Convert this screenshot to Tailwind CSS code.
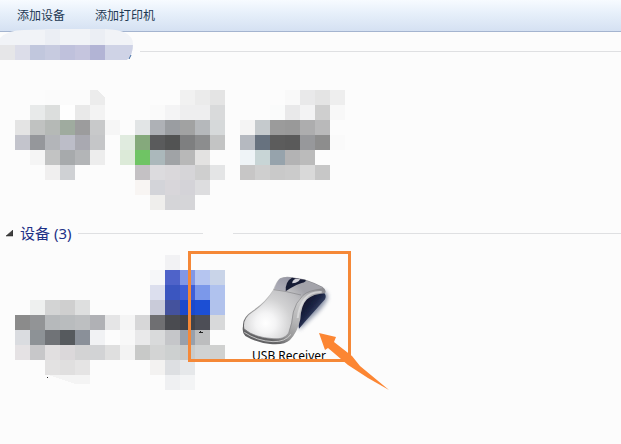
<!DOCTYPE html>
<html lang="zh-CN">
<head>
    <meta charset="utf-8">
    <title>设备和打印机</title>
    <script src="https://cdn.jsdelivr.net/npm/@tailwindcss/browser@4"></script>
</head>
<body class="min-h-screen bg-[#fcfcfc] font-['Noto_Sans','Noto_Sans_CJK_SC',sans-serif] text-black overflow-x-hidden">
    <header class="flex items-center h-8 pl-[17px] gap-[30px] text-xs text-[#1e3953] border-b border-[#a4b4cf] bg-linear-to-b from-[#f7fbff] from-0% via-[#e6effa] via-45% to-[#d5e1f2]">
        <button type="button">添加设备</button>
        <button type="button">添加打印机</button>
    </header>

    <main>
        <section>
            <div class="relative -mt-[3px] flex items-center gap-[7px]">
                <svg class="w-[133px] h-[31px] shrink-0" viewBox="0 0 133 31">
                    <clipPath id="pill"><path d="M0 9Q8 1 24 1L60 0H105Q133 1 133 15Q133 26 127 31H0z"/></clipPath>
                    <g clip-path="url(#pill)" shape-rendering="crispEdges">
                        <path fill="#f1f3f7" d="M0 0h133v31H0z"/>
                        <path fill="#ebeef4" d="M45 0h15v16H45zM90 0h15v16H90z"/>
                        <path fill="#e6e6e8" d="M0 16h15v15H0z"/>
                        <path fill="#dcdde9" d="M15 16h15v15H15z"/>
                        <path fill="#c1c7dd" d="M30 16h15v15H30z"/>
                        <path fill="#c7cbe0" d="M45 16h15v15H45z"/>
                        <path fill="#bfc1dc" d="M60 16h15v15H60z"/>
                        <path fill="#c5c5de" d="M75 16h15v15H75z"/>
                        <path fill="#b2b4d5" d="M90 16h15v15H90z"/>
                        <path fill="#cfd3e6" d="M105 16h28v15h-28z"/>
                    </g>
                    <path d="M131 26L129 30" stroke="#3c6aa0"/>
                </svg>
                <div class="grow h-px mt-[14px] bg-[#dfe0e2]"></div>
            </div>
            <div class="flex items-start pl-[15px] pt-[30px] h-[150px]">
                <svg class="w-[105px] h-[90px] shrink-0" viewBox="0 0 7 6" shape-rendering="crispEdges" data-tile="printer1"></svg>
                <svg class="w-[105px] h-[120px] shrink-0" viewBox="0 0 7 8" shape-rendering="crispEdges" data-tile="printer2"></svg>
                <svg class="w-[105px] h-[90px] shrink-0 ml-[15px]" viewBox="0 0 7 6" shape-rendering="crispEdges" data-tile="printer3"></svg>
            </div>
        </section>

        <section class="pt-[11px]">
            <div class="flex items-center h-6 gap-[7px]">
                <h2 class="shrink-0">
                    <button type="button" class="flex items-center gap-[7px] pl-[6px] text-[15px] leading-6 text-[#1e3287]">
                        <svg class="w-[7px] h-[7px]" viewBox="0 0 7 7"><path d="M7 0V6H0z" fill="#404040" stroke="#222" stroke-width=".5"/></svg>
                        设备 (3)
                    </button>
                </h2>
                <div class="w-[125px] h-px bg-[#dfe0e2]"></div>
                <div class="w-4 h-px"></div>
                <div class="grow h-px bg-[#dfe0e2]"></div>
            </div>
            <div class="flex items-start pl-[15px] pt-[10px]">
                <svg class="w-[105px] h-[90px] shrink-0 mt-[45px]" viewBox="0 0 7 6" shape-rendering="crispEdges" data-tile="device1"></svg>
                <svg class="w-[105px] h-[135px] shrink-0" viewBox="0 0 7 9" shape-rendering="crispEdges" data-tile="device2"></svg>
                <figure class="relative ml-[10px] pt-[13px] w-[108px] shrink-0">
                    <svg class="w-[100px] h-[80px]" viewBox="0 0 300 240">
                        <defs>
                            <radialGradient id="palm" gradientUnits="userSpaceOnUse" cx="92" cy="165" r="150">
                                <stop offset="0" stop-color="#fff"/>
                                <stop offset=".2" stop-color="#f4f4f5"/>
                                <stop offset=".5" stop-color="#d2d2d3"/>
                                <stop offset=".8" stop-color="#bdbdc0"/>
                                <stop offset="1" stop-color="#a3a3aa"/>
                            </radialGradient>
                            <linearGradient id="rim" gradientUnits="userSpaceOnUse" x1="240" y1="50" x2="130" y2="230">
                                <stop offset="0" stop-color="#8b8b90"/>
                                <stop offset=".3" stop-color="#cacacb"/>
                                <stop offset=".6" stop-color="#b5b5b6"/>
                                <stop offset=".85" stop-color="#929293"/>
                                <stop offset="1" stop-color="#626264"/>
                            </linearGradient>
                            <linearGradient id="side" gradientUnits="userSpaceOnUse" x1="200" y1="110" x2="245" y2="145">
                                <stop offset="0" stop-color="#10152c"/>
                                <stop offset=".5" stop-color="#1b2444"/>
                                <stop offset="1" stop-color="#424d6e"/>
                            </linearGradient>
                            <filter id="soft" x="-20%" y="-20%" width="140%" height="140%"><feGaussianBlur stdDeviation="6"/></filter>
                            <filter id="edge"><feGaussianBlur stdDeviation="1.5"/></filter>
                        </defs>
                        <path d="M262 66Q284 76 276 96Q262 122 232 148L192 186L190 120z" fill="#4e5a78" opacity=".65" filter="url(#soft)"/>
                        <path d="M262 70Q277 80 270 94Q254 112 238 130Q216 154 192 182L186 140Q200 86 262 70z" fill="url(#side)" filter="url(#edge)"/>
                        <path d="M135 31Q146 25 166 27L208 34Q240 45 262 56Q276 66 270 76Q234 78 216 94Q198 112 196 154Q188 192 165 216Q148 232 105 228Q60 222 31 204Q20 194 24 174Q22 148 52 129Q92 102 114 66Q124 40 135 31z" fill="url(#rim)"/>
                        <path d="M135 32Q146 26 166 28L206 35Q240 46 264 60Q226 66 204 82Q180 104 174 132Q170 166 161 196Q150 215 116 212Q60 210 28 182Q22 152 52 133Q94 104 115 68Q126 40 135 32z" fill="url(#palm)"/>
                        <path d="M135 32Q148 26 168 28L160 40L151 68L118 64Q125 40 135 32z" fill="#8889a0" opacity=".4" filter="url(#edge)"/>
                        <path d="M152 70Q151 56 156 45Q162 33 171 29L212 36Q214 42 200 45Q180 51 166 61z" fill="#181b36" filter="url(#edge)"/>
                        <path d="M172 46Q170 38 182 32L196 34Q192 41 182 44z" fill="#d2d2da" filter="url(#edge)"/>
                        <path d="M116 65L150 70L198 81M258 64Q222 66 204 82Q181 105 175 132Q172 166 161 195Q148 216 114 212Q60 209 27 184" fill="none" stroke="#858588" stroke-width="2"/>
                        <path d="M260 72Q228 70 210 92Q192 116 188 150" fill="none" stroke="#e2e2e3" stroke-width="6" opacity=".7" filter="url(#edge)"/>
                        <path d="M28 193Q66 219 114 221Q150 222 168 199" fill="none" stroke="#dcdcdc" stroke-width="3" opacity=".8"/>
                    </svg>
                    <figcaption class="h-[12px] overflow-hidden text-center text-xs leading-4">USB Receiver</figcaption>
                    <div class="absolute -left-[47px] -top-[4px] w-[163px] h-[111px] border-3 border-[#f58837]"></div>
                    <svg class="absolute left-[83px] top-[77px] w-[72px] h-[60px]" viewBox="0 0 72 60">
                        <path d="M1 1L18 5L16 10L34 24L42 34L71 58L50 46L30 33L10 16L7 18z" fill="#fc8633"/>
                    </svg>
                </figure>
            </div>
        </section>
    </main>

    <script>
        // one row per string, one colour per cell, "-" leaves the cell empty
        const tiles = {
            printer1: [
                '- - fbfbfb fbfbfb fbfbfb - -',
                '- e8eaea dcdedd fefefe e9e9e9 f3f3f3 -',
                'e4e4e4 c0c2c1 b5b9b6 9fab9f 9c9c9d c8c9ca f6f6f6',
                'c3c4cc 95979b b3b5b9 bcbdc8 a9a9b1 c5c6c8 -',
                '- f5f5f5 c2c3c3 a7aaac b3b5b7 ededed -',
                '- - f0efef cfd1d4 - - -',
            ],
            printer2: [
                '- - - - f1f1f1 ebebeb e4e4e4',
                '- - fafafa f4f4f5 eeeeef eeeeef d9dadb',
                '- e2e5e6 aeb1b6 9a9da1 a1a2a2 b5b8bb d6d9da',
                'e0ebdf 85a97c 5a5b5c 525353 7e7f80 8c8d8e c3c4c4',
                'dcead8 6fc464 abb8bb a0a3a6 b8b8b8 e3e2e1 -',
                '- c4c1c4 dcdbde dad8db d6d5d8 cfcfcf e4e5e6',
                '- f8f5f3 d3d4d9 d8d6da d4d3d8 dddddf -',
                '- - efeeec d5d5d8 d5d5d8 - -',
            ],
            printer3: [
                '- - - f9f9f9 e9e9ea e4e4e4 eeeeee',
                '- - fafbfb e9e9ea f3f3f4 cfcfcf f8f8f8',
                'f4f4f4 c5cacd 9b9b9b 999999 adadae b9b9ba -',
                'b5b9c0 67727f 5c5c5c 5a5a5a 97989b 8d8d8d fafafa',
                'eff4f7 c8d5d6 96a3ac b3b3b4 bbbbbb - -',
                'c7c6c6 cfcfcf c9c9c9 cbcbcb d9d9d9 c7c7c7 -',
            ],
            device1: [
                '- eef0ef d3d4d4 cfcfcf dedfdf - -',
                '8b8b8b 929496 b6b9bb b9bcbe bdbfc1 b0b1b5 e5e5e6',
                'dadce0 8d9296 707377 565a5e 8a9099 f1f2f4 -',
                'e5e2e4 c7c7c9 e1dfe0 dbd8da d3d3d4 d2d3d5 dfdfdf',
                '- - e3e2e2 e0dfdf e5e4e4 - -',
            ],
            device2: [
                '- - - f2f2f4 - - -',
                '- - f6f7f9 4f63c9 8297e6 b5c5f0 c9d4e8',
                '- - dcdfee 3b56c0 3f5fd8 7b98ea b0c2ee',
                '- - c9cbd9 44529d 1b49cc 1c4fd4 b1c2ec',
                'f5f5f5 d7d7d8 6f6f72 4a4b50 42434a 4d4e56 d8d9da',
                'f8f8f8 e9e9ea d9dadb c5c6c9 99a0ab bcbdbe -',
                'f3f3f3 c8c9c8 d3d4d4 cdd0d0 c9cac9 d0d2d2 d0d1d0',
                '- - f3f2f1 dddfe2 e6e8ea - -',
                '- - - eff0f2 f3f4f5 - -',
            ],
        };
        // leftovers that do not fill a whole cell
        const extras = {
            printer1: '<path fill="#ececec" d="M5 0H5.5L6 .5V1H5z"/>',
            device1: '<path fill="#f4f4f4" d="M2.2 5H5V5.6H4z"/><path fill="#222" d="M2.1 5.1h.1v.1h-.1z"/>',
            device2: '<path fill="#222" d="M5.27 5.13h.27v.07h-.27zM5.35 5.07h.07v.07h-.07z"/>',
        };

        document.querySelectorAll('[data-tile]').forEach((svg) => {
            const name = svg.dataset.tile;
            let cells = '';
            tiles[name].forEach((row, y) => {
                row.split(' ').forEach((color, x) => {
                    if (color !== '-') {
                        cells += `<rect x="${x}" y="${y}" width="1" height="1" fill="#${color}"/>`;
                    }
                });
            });
            svg.innerHTML = cells + (extras[name] || '');
        });
    </script>
</body>
</html>
